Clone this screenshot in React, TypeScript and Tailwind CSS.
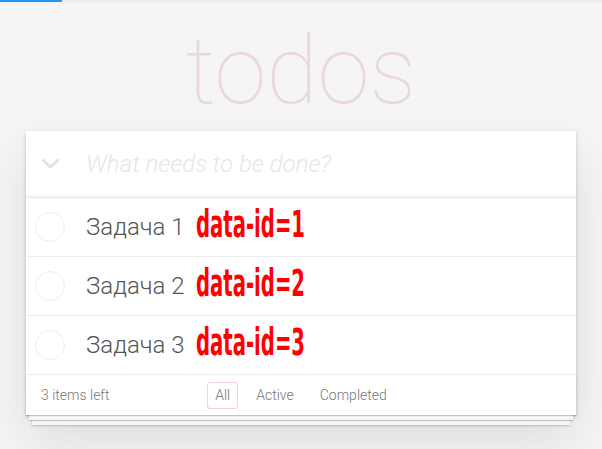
import React from "react";

const todos = [
  { id: 1, title: "Задача 1" },
  { id: 2, title: "Задача 2" },
  { id: 3, title: "Задача 3" },
];

const filters = ["All", "Active", "Completed"];

export default function App() {
  return (
    <div className="min-h-screen bg-[#f5f5f5] font-['Roboto','Liberation_Sans',sans-serif] font-light text-[#4d4d4d]">
      {/* progress strip */}
      <div className="h-[2px] bg-[#ebebeb]">
        <div className="h-full w-[62px] bg-[#2196f3]" />
      </div>
      <div className="h-px bg-[#f0f0f0]" />

      <section className="mx-auto max-w-[550px]">
        <h1 className="h-[128px] pt-[18px] text-center text-[94px] leading-[100px] font-thin text-[rgba(175,47,47,0.15)]">
          todos
        </h1>

        <div className="bg-white shadow-[0_2px_4px_0_rgba(0,0,0,0.2),0_25px_50px_0_rgba(0,0,0,0.1)]">
          {/* new todo */}
          <div className="flex h-[66px] items-center shadow-[inset_0_-2px_1px_rgba(0,0,0,0.03)]">
            <div className="w-[60px] pl-[16px]">
              <svg width="17" height="10" viewBox="0 0 17 10" fill="none">
                <path d="M1.5 1.5 8.5 8 15.5 1.5" stroke="#e3e3e3" strokeWidth="3" strokeLinecap="round" />
              </svg>
            </div>
            <span className="text-[24px] italic font-light text-[#e6e6e6]">What needs to be done?</span>
          </div>

          {/* list */}
          <ul className="border-t border-[#e6e6e6]">
            {todos.map((t) => (
              <li key={t.id} className="flex h-[59px] items-center border-b border-[#ededed] pl-[9px]">
                <svg width="30" height="30" viewBox="0 0 30 30" className="shrink-0">
                  <circle cx="15" cy="15" r="14.5" fill="none" stroke="#ededed" strokeWidth="1" />
                </svg>
                <span className="ml-[21px] text-[24px] leading-[1.2] font-light text-[#555]">{t.title}</span>
                <span className="mb-[5px] ml-[11px] inline-block origin-left scale-x-[0.59] font-['DejaVu_Sans_Condensed',sans-serif] text-[37px] leading-none font-bold text-[#ff0000]">
                  data-id={t.id}
                </span>
              </li>
            ))}
          </ul>

          {/* footer */}
          <footer className="grid h-[40px] grid-cols-[1fr_auto_1fr] items-center px-[15px] text-[14px] text-[#777] shadow-[0_1px_1px_rgba(0,0,0,0.2),0_8px_0_-3px_#f6f6f6,0_9px_1px_-3px_rgba(0,0,0,0.2),0_16px_0_-6px_#f6f6f6,0_17px_2px_-6px_rgba(0,0,0,0.2)]">
            <span>3 items left</span>
            <ul className="flex gap-[10px]">
              {filters.map((f, i) => (
                <li
                  key={f}
                  className={`rounded-[3px] border px-[7px] py-[2px] ${
                    i === 0 ? "border-[rgba(175,47,47,0.2)]" : "border-transparent"
                  }`}
                >
                  {f}
                </li>
              ))}
            </ul>
            <span />
          </footer>
        </div>
      </section>
    </div>
  );
}
